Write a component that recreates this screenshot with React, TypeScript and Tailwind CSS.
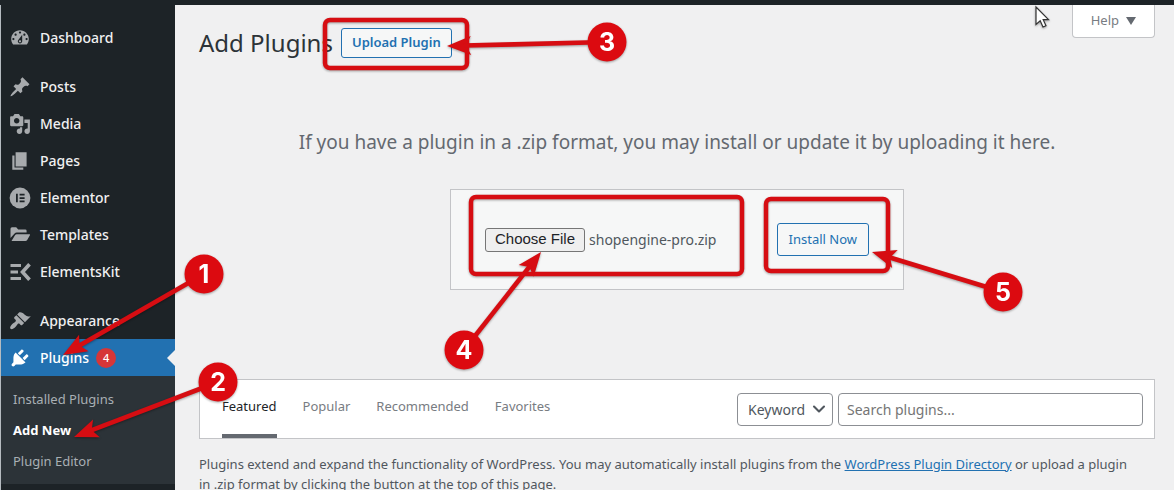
import React from 'react';
import { ChevronDown } from 'lucide-react';

type MenuEntry = {
  label: string;
  icon: React.ReactNode;
  spaced?: boolean;
};

const DashIcon = ({ d }: { d: string }) => (
  <svg viewBox="0 0 20 20" className="size-[22px] shrink-0 fill-current" aria-hidden="true">
    <path fillRule="evenodd" d={d} />
  </svg>
);

const ElementorIcon = () => (
  <svg viewBox="0 0 22 22" className="size-[22px] shrink-0" aria-hidden="true">
    <circle cx="11" cy="11" r="10.4" fill="currentColor" />
    <path d="M7 6.8h1.8v8.4H7zM10.6 6.8h5v1.7h-5zM10.6 10.2h5v1.7h-5zM10.6 13.5h5v1.7h-5z" fill="#1d2327" />
  </svg>
);

const TemplatesIcon = () => (
  <svg viewBox="0 0 22 22" className="size-[22px] shrink-0 fill-current" aria-hidden="true">
    <path d="M1.500 14V4.700q0-1.500 1.500-1.500h4.200l2 2.200h7q1.400 0 1.400 1.400v1.700H7.800q-1.400 0-2.200 1.100zM2.500 17l3.500-5.800q.6-1 1.700-1h12.700q1.100 0 .5 1l-2.700 4.700q-.6 1.100-1.800 1.100z" />
  </svg>
);

const ElementsKitIcon = () => (
  <svg viewBox="0 0 22 22" className="size-[22px] shrink-0" aria-hidden="true">
    <path d="M1.500 3H12v3H1.500zM1.500 9.500H9v3H1.500zM1.500 16H12v3H1.500z" fill="currentColor" />
    <path d="M20.500 3.200l-7 7.800 7 7.800" fill="none" stroke="currentColor" strokeWidth="3.600" />
  </svg>
);

const menu: MenuEntry[] = [
  {
    label: 'Dashboard',
    icon: <DashIcon d="M3.76 16h12.48c1.1-1.37 1.76-3.11 1.76-5 0-4.42-3.58-8-8-8s-8 3.58-8 8c0 1.89.66 3.63 1.76 5zM10 4c.55 0 1 .45 1 1s-.45 1-1 1-1-.45-1-1 .45-1 1-1zM6 6c.55 0 1 .45 1 1s-.45 1-1 1-1-.45-1-1 .45-1 1-1zm8 0c.55 0 1 .45 1 1s-.45 1-1 1-1-.45-1-1 .45-1 1-1zm-5.37 5.55L12 7v6c0 1.100-.9 2-2 2s-2-.9-2-2c0-.57.24-1.080.63-1.450zM4 10c.55 0 1 .45 1 1s-.45 1-1 1-1-.45-1-1 .45-1 1-1zm12 0c.55 0 1 .45 1 1s-.45 1-1 1-1-.45-1-1 .45-1 1-1zm-5 3c0-.55-.45-1-1-1s-1 .45-1 1 .45 1 1 1 1-.45 1-1z" />,
  },
  {
    label: 'Posts',
    spaced: true,
    icon: <DashIcon d="M10.44 3.020l1.820-1.820 6.360 6.350-1.830 1.820c-1.050-.68-2.480-.57-3.410.36l-.75.75c-.92.93-1.040 2.350-.35 3.410l-1.830 1.820-2.410-2.410-2.800 2.790c-.42.42-3.380 2.710-3.800 2.290s1.860-3.390 2.280-3.810l2.790-2.790L4.100 9.360l1.830-1.820c1.050.69 2.480.57 3.400-.36l.75-.75c.93-.92 1.050-2.350.36-3.410z" />,
  },
  {
    label: 'Media',
    icon: <DashIcon d="M13 11V4c0-.55-.45-1-1-1h-1.670L9 1H5L3.670 3H2c-.55 0-1 .45-1 1v7c0 .55.45 1 1 1h10c.55 0 1-.45 1-1zM7 4.500c1.380 0 2.500 1.120 2.500 2.500S8.380 9.500 7 9.500 4.500 8.380 4.500 7 5.620 4.500 7 4.500zM14 6h5v10.500c0 1.380-1.120 2.500-2.500 2.500S14 17.880 14 16.500s1.120-2.500 2.500-2.500c.17 0 .34.02.5.05V9h-3V6zm-4 8.050V13h2v3.500c0 1.380-1.120 2.500-2.500 2.500S7 17.880 7 16.500 8.120 14 9.500 14c.17 0 .34.02.5.05z" />,
  },
  { label: 'Pages', icon: <DashIcon d="M6 15V2h10v13H6zm-1 1h8v2H3V5h2v11z" /> },
  { label: 'Elementor', icon: <ElementorIcon /> },
  { label: 'Templates', icon: <TemplatesIcon /> },
  { label: 'ElementsKit', icon: <ElementsKitIcon /> },
  {
    label: 'Appearance',
    spaced: true,
    icon: <DashIcon d="M14.480 11.060L7.410 3.990l1.500-1.500c.5-.56 2.300-.47 3.510.32 1.210.8 1.430 1.280 2.910 2.100 1.180.64 2.450 1.260 4.450.85zm-.71.71L6.700 4.700 4.930 6.470c-.39.39-.39 1.020 0 1.410l1.060 1.060c.39.39.39 1.030 0 1.420-.6.6-1.430 1.110-2.210 1.690-.35.26-.7.53-1.010.84C1.430 14.230.4 16.080 1.400 17.070c.99 1 2.840-.03 4.180-1.360.31-.31.58-.66.85-1.020.57-.78 1.080-1.610 1.690-2.210.39-.39 1.020-.39 1.410 0l1.060 1.060c.39.39 1.020.39 1.410 0z" />,
  },
];

const pluginsPath =
  'M13.110 4.360L9.870 7.600 8 5.730l3.240-3.240c.35-.34 1.050-.2 1.560.32.52.51.66 1.210.31 1.550zm-8 1.770l.91-1.120 9.010 9.010-1.190.84c-.71.71-2.630 1.160-3.820 1.160H6.140L4.900 17.260c-.59.59-1.540.59-2.120 0-.59-.58-.59-1.530 0-2.120l1.240-1.240v-3.880c0-1.130.4-3.190 1.090-3.890zm7.260 3.970l3.240-3.240c.34-.35 1.040-.21 1.550.31.52.51.66 1.210.31 1.550l-3.240 3.250z';

const tabs = ['Featured', 'Popular', 'Recommended', 'Favorites'];

// Numbered steps: badge centre and the point the arrow lands on
const steps = [
  { n: 1, x: 204, y: 274, tipX: 63, tipY: 355 },
  { n: 2, x: 218, y: 382, tipX: 74, tipY: 437 },
  { n: 3, x: 607, y: 42, tipX: 447, tipY: 46 },
  { n: 4, x: 464, y: 350, tipX: 541, tipY: 252 },
  { n: 5, x: 1003, y: 292, tipX: 872, tipY: 252 },
];

const highlights = [
  { x: 325, y: 20, w: 142, h: 48 },
  { x: 471, y: 197, w: 271, h: 77 },
  { x: 766, y: 199, w: 122, h: 72 },
];

function Annotations() {
  return (
    <svg
      width="1174"
      height="490"
      viewBox="0 0 1174 490"
      className="absolute top-0 left-0 pointer-events-none drop-shadow-[0_1px_1px_rgba(0,0,0,0.35)]"
    >
      {highlights.map((h) => (
        <rect key={h.x} x={h.x} y={h.y} width={h.w} height={h.h} rx="5" fill="none" stroke="#d60d12" strokeWidth="4.500" />
      ))}
      {steps.map((s) => {
        const angle = (Math.atan2(s.y - s.tipY, s.x - s.tipX) * 180) / Math.PI;
        const length = Math.hypot(s.x - s.tipX, s.y - s.tipY);
        return (
          <g key={s.n}>
            <g transform={`translate(${s.tipX} ${s.tipY}) rotate(${angle})`} fill="#d60d12">
              <path d="M0 0L24-9.500 19 0 24 9.500z" />
              <path d={`M17-2.300H${length}V2.300H17z`} />
            </g>
            <circle cx={s.x} cy={s.y} r="19.500" fill="#dc0a10" />
            <text
              x={s.x}
              y={s.y + 9}
              textAnchor="middle"
              fill="#fff"
              className="font-['Inter',sans-serif] text-[25px] font-bold"
            >
              {s.n}
            </text>
          </g>
        );
      })}
      <path
        d="M1036 7v17.500l4.200-3.700 2.800 6.200 3-1.300-2.800-6h5.300z"
        fill="#fff"
        stroke="#333"
        strokeWidth="1.200"
      />
    </svg>
  );
}

function Sidebar() {
  return (
    <nav className="w-[175px] shrink-0 border-l border-[#b5bbc0] bg-[#1d2327] pt-[14px] text-[14px] font-medium text-[#f0f0f1]">
      {menu.map((item) => (
        <a
          key={item.label}
          href="#"
          className={`flex h-[37px] items-center gap-[9px] pl-2 ${item.spaced ? 'mt-3' : ''}`}
        >
          <span className="text-[#a7aaad]">{item.icon}</span>
          {item.label}
        </a>
      ))}
      <a href="#" className="relative flex h-[37px] items-center gap-[9px] bg-[#2271b1] pl-2 text-white">
        <DashIcon d={pluginsPath} />
        <span className="flex items-center gap-[7px]">
          Plugins
          <span className="flex size-5 items-center justify-center rounded-full bg-[#d63638] text-[11px] leading-none">4</span>
        </span>
        <span className="absolute top-1/2 right-0 -translate-y-1/2 border-y-8 border-r-8 border-y-transparent border-r-[#f0f0f1]" />
      </a>
      <div className="bg-[#2c3338] px-3 pt-2 pb-[7px] text-[13px] font-normal text-[#a9afb4]">
        <a href="#" className="flex h-[31px] items-center">Installed Plugins</a>
        <a href="#" className="flex h-[31px] items-center font-bold text-white">Add New</a>
        <a href="#" className="flex h-[31px] items-center">Plugin Editor</a>
      </div>
    </nav>
  );
}

export default function App() {
  return (
    <div className="relative flex h-screen flex-col overflow-hidden bg-[#f0f0f1] font-['Noto_Sans','Open_Sans',sans-serif] text-[#50575e]">
      <div className="h-[5px] shrink-0 bg-[#1d2327]" />
      <div className="flex flex-1">
        <Sidebar />

        <main className="min-w-0 flex-1 pr-[19px] pl-6">
          <header className="flex items-start justify-between">
            <div className="flex items-center gap-2 pt-[19px]">
              <h1 className="text-[24px] leading-[38px] text-[#2c3338]">Add Plugins</h1>
              <button className="h-[30px] rounded-[3px] border border-[#2271b1] bg-[#f6f7f7] px-[10px] text-[13px] font-semibold text-[#2271b1]">
                Upload Plugin
              </button>
            </div>
            <button className="flex h-[33px] items-center gap-[7px] rounded-b-[4px] border border-t-0 border-[#c3c4c7] bg-white px-[18px] text-[13px] text-[#787c82]">
              Help
              <svg viewBox="0 0 10 8" className="h-2 w-[10px] fill-[#646970]" aria-hidden="true">
                <path d="M0 0h10L5 8z" />
              </svg>
            </button>
          </header>

          <p className="mt-[66px] text-center text-[19px] leading-7 text-[#646970]">
            If you have a plugin in a .zip format, you may install or update it by uploading it here.
          </p>

          <form
            className="mx-auto mt-[33px] flex h-[101px] w-[454px] items-center justify-between border border-[#c3c4c7] bg-[#f6f7f7] px-[34px]"
            onSubmit={(e) => e.preventDefault()}
          >
            <label className="relative flex items-center gap-1 text-[14px]">
              <input type="file" className="sr-only" />
              <span className="flex h-6 items-center rounded-[3px] border border-[#767676] bg-[#efefef] px-[9px] font-['Liberation_Sans',Arial,sans-serif] text-[15px] text-[#1d2327]">
                Choose File
              </span>
              shopengine-pro.zip
            </label>
            <button className="h-[33px] rounded-[3px] border border-[#2271b1] bg-[#f6f7f7] px-[11px] text-[13px] text-[#2271b1]">
              Install Now
            </button>
          </form>

          <div className="mt-[89px] flex h-[60px] items-center justify-between border border-[#c3c4c7] bg-white pr-[11px] pl-[22px]">
            <div className="flex h-full gap-[26px] text-[13px] text-[#787c82]">
              {tabs.map((tab, i) => (
                <a
                  key={tab}
                  href="#"
                  className={`flex items-center border-b-4 ${i === 0 ? 'border-[#646970] text-[#1d2327]' : 'border-transparent'}`}
                >
                  {tab}
                </a>
              ))}
            </div>
            <div className="flex gap-[5px] text-[14px]">
              <div className="relative">
                <select
                  aria-label="Search by"
                  className="h-[33px] w-24 appearance-none rounded-[4px] border border-[#8c8f94] bg-white pl-[10px] text-[#50575e]"
                >
                  <option>Keyword</option>
                </select>
                <ChevronDown size={20} strokeWidth={2.5} className="pointer-events-none absolute top-[6px] right-1 text-[#50575e]" />
              </div>
              <input
                type="search"
                aria-label="Search plugins"
                placeholder="Search plugins..."
                className="h-[33px] w-[305px] rounded-[4px] border border-[#8c8f94] bg-white px-2 placeholder:text-[#757575]"
              />
            </div>
          </div>

          <p className="mt-[15px] pr-6 text-[13px] leading-5">
            Plugins extend and expand the functionality of WordPress. You may automatically install plugins from the{' '}
            <a href="#" className="text-[#2271b1] underline">WordPress Plugin Directory</a> or upload a plugin in .zip
            format by clicking the button at the top of this page.
          </p>
        </main>
      </div>
      <Annotations />
    </div>
  );
}
